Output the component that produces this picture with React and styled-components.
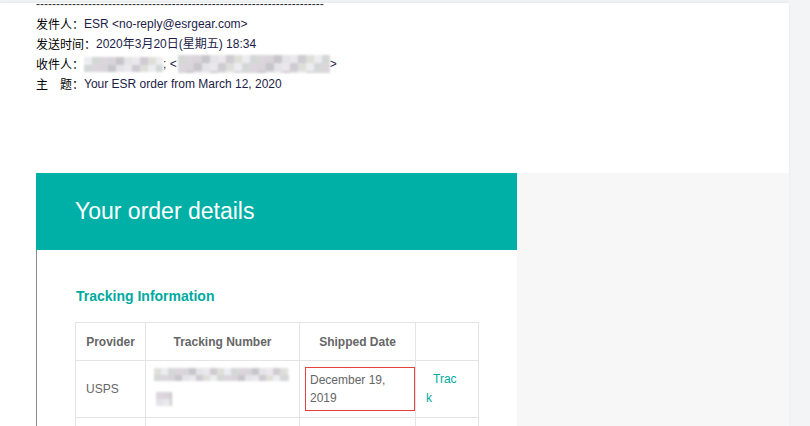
import React from "react";
import styled, { createGlobalStyle } from "styled-components";

const GlobalStyles = createGlobalStyle`
  html, body {
    margin: 0;
    padding: 0;
    background: #f3f4f6;
  }
  body {
    font-family: "Liberation Sans", Arial, "Noto Sans CJK SC", sans-serif;
  }
`;

const Page = styled.div`
  width: 810px;
  height: 426px;
  overflow: hidden;
  background: #f3f4f6;
  padding-top: 3px;
  box-sizing: border-box;
`;

const Panel = styled.div`
  width: 789px;
  height: 423px;
  background: #fff;
  overflow: hidden;
  box-shadow: 0 -1px 3px rgba(0, 0, 0, 0.06);
`;

const Meta = styled.div`
  display: flow-root;
  padding-left: 36px;
  height: 170px;
  font-family: "Liberation Sans", Arial, "Noto Sans CJK SC", sans-serif;
  font-size: 12px;
  line-height: 20px;
  color: #000;
`;

const Rule = styled.div`
  margin-top: -9px;
  color: #333;
  white-space: nowrap;
`;

const Line = styled.div`
  display: flex;
  align-items: center;
  white-space: nowrap;
`;

const Label = styled.span`
  font-family: "Noto Sans CJK SC", sans-serif;
  color: #000;
`;

const Value = styled.span`
  color: #1c1c48;
  display: inline-flex;
  align-items: center;
`;

const Body = styled.div`
  margin-left: 36px;
  background: #f7f7f7;
  height: 253px;
`;

const Card = styled.div`
  width: 481px;
  background: #fff;
`;

const CardHead = styled.div`
  background: #00b0a6;
  height: 77px;
  padding-left: 39px;
  display: flex;
  align-items: center;
  color: #fff;
  font-size: 23px;
`;

const CardBody = styled.div`
  border-left: 1px solid #8c8c8c;
  padding: 38px 0 0 38px;
  height: 200px;
`;

const Heading = styled.div`
  color: #00aa9f;
  font-weight: bold;
  font-size: 14px;
  line-height: 17px;
  margin-left: 1px;
  margin-bottom: 17px;
`;

const Table = styled.table`
  border-collapse: collapse;
  font-size: 12px;
  color: #666;
  table-layout: fixed;
  width: 403px;
`;

const Th = styled.th`
  border: 1px solid #e4e4e4;
  height: 37px;
  padding: 0;
  font-weight: bold;
  text-align: center;
`;

const Td = styled.td`
  border: 1px solid #e4e4e4;
  height: 56px;
  padding: 0 0 0 10px;
  vertical-align: middle;
  text-align: left;
  line-height: 18px;
`;

const DateBox = styled.div`
  border: 1px solid #e8403f;
  margin: 0 0 0 -5px;
  height: 44px;
  padding: 3px 0 0 4px;
  box-sizing: border-box;
`;

const TrackLink = styled.a`
  display: inline-block;
  width: 34px;
  color: #00aa9f;
  text-decoration: none;
  text-indent: 7px;
  word-break: break-all;
  line-height: 19px;
`;

const Mosaic = ({ w, h, cell = 8, seed = 1 }) => {
  const cols = Math.ceil(w / cell);
  const rows = Math.ceil(h / cell);
  const tones = ["#e2e2e6", "#d4d0d6", "#c9c6ce", "#dcdcd6", "#e8e6ea", "#cfd4d2", "#d8d2d8", "#ecebef", "#c2c0c6"];
  const rects = [];
  let s = seed;
  for (let r = 0; r < rows; r++) {
    for (let c = 0; c < cols; c++) {
      s = (s * 9301 + 49297) % 233280;
      rects.push(
        <rect key={r + "-" + c} x={c * cell} y={r * cell} width={cell} height={cell} fill={tones[s % tones.length]} />
      );
    }
  }
  return (
    <svg width={w} height={h} viewBox={`0 0 ${w} ${h}`} style={{ display: "block" }}>
      {rects}
    </svg>
  );
};

const Blur = styled.span`
  display: inline-block;
  opacity: 0.9;
  filter: blur(1px);
  margin: ${(p) => p.$m || "0"};
`;

export default function App() {
  return (
    <Page>
      <GlobalStyles />
      <Panel>
        <Meta>
          <Rule>{"-".repeat(72)}</Rule>
          <Line>
            <Label>发件人：</Label>
            <Value>ESR &lt;no-reply@esrgear.com&gt;</Value>
          </Line>
          <Line>
            <Label>发送时间：</Label>
            <Value>2020年3月20日(星期五) 18:34</Value>
          </Line>
          <Line>
            <Label>收件人：</Label>
            <Value>
              <Blur>
                <Mosaic w={79} h={15} seed={3} />
              </Blur>
              ;&nbsp;&lt;
              <Blur $m="0 0 0 1px">
                <Mosaic w={152} h={18} seed={7} />
              </Blur>
              &gt;
            </Value>
          </Line>
          <Line>
            <Label>主　题：</Label>
            <Value>Your ESR order from March 12, 2020</Value>
          </Line>
        </Meta>
        <Body>
          <Card>
            <CardHead>Your order details</CardHead>
            <CardBody>
              <Heading>Tracking Information</Heading>
              <Table>
                <colgroup>
                  <col style={{ width: 70 }} />
                  <col style={{ width: 154 }} />
                  <col style={{ width: 116 }} />
                  <col style={{ width: 63 }} />
                </colgroup>
                <thead>
                  <tr>
                    <Th>Provider</Th>
                    <Th>Tracking Number</Th>
                    <Th>Shipped Date</Th>
                    <Th></Th>
                  </tr>
                </thead>
                <tbody>
                  <tr>
                    <Td>USPS</Td>
                    <Td>
                      <Blur $m="0 0 0 -2px">
                        <Mosaic w={135} h={13} cell={7} seed={11} />
                      </Blur>
                      <br />
                      <Blur $m="6px 0 0 0">
                        <Mosaic w={16} h={14} cell={7} seed={5} />
                      </Blur>
                    </Td>
                    <Td>
                      <DateBox>December 19, 2019</DateBox>
                    </Td>
                    <Td>
                      <TrackLink href="#">Track</TrackLink>
                    </Td>
                  </tr>
                  <tr>
                    <Td></Td>
                    <Td></Td>
                    <Td></Td>
                    <Td></Td>
                  </tr>
                </tbody>
              </Table>
            </CardBody>
          </Card>
        </Body>
      </Panel>
    </Page>
  );
}
